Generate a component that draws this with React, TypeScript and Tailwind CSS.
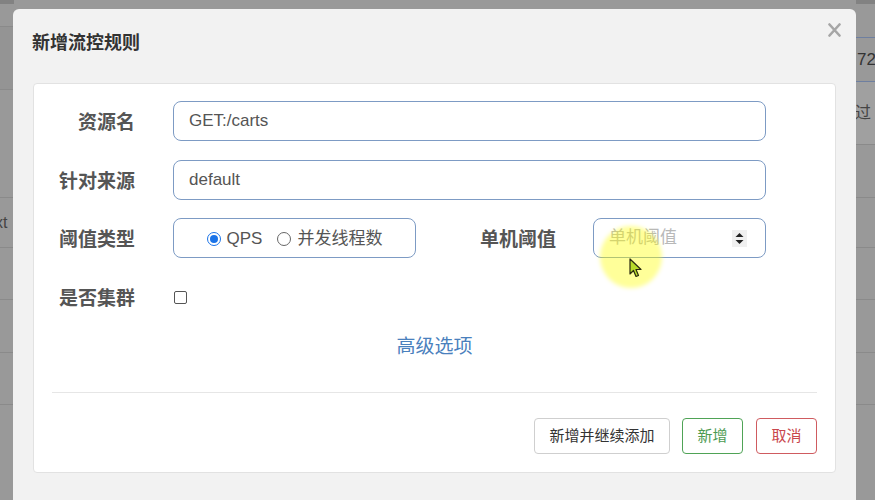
import React from "react";

const FONT = { fontFamily: '"Liberation Sans", "Noto Sans CJK SC", Arial, sans-serif' };

function LeftBg() {
  return (
    <div className="flex w-[14px] flex-col">
      <div className="h-[4px] bg-[#828282]" />
      <div className="h-[23px] border-b border-[#8a8a8a]" />
      <div className="h-[63px] border-b border-[#8a8a8a] bg-[#949494]" />
      <div className="h-[108px] border-b border-[#8a8a8a]" />
      <div className="flex h-[50px] items-center overflow-hidden border-b border-[#8a8a8a] text-[16px] text-[#444]">
        <span className="-ml-[5px]">xt</span>
      </div>
      <div className="h-[52px] border-b border-[#8a8a8a]" />
      <div className="h-[53px] border-b border-[#8a8a8a]" />
      <div className="h-[52px] border-b border-[#8a8a8a]" />
      <div className="flex-1" />
    </div>
  );
}

function RightBg() {
  return (
    <div className="flex w-[19px] flex-col">
      <div className="h-[4px] bg-[#828282]" />
      <div className="h-[34px] border-b border-[#6e7fa0]" />
      <div className="flex h-[44px] items-center border-b border-[#6e7fa0] text-[17px] text-[#333]">
        <span className="pl-[1px]">72</span>
      </div>
      <div className="flex h-[63px] items-center border-b border-[#8a8a8a] bg-[#a0a0a0] text-[16px] text-[#444]">
        <span className="-ml-[1px]">过</span>
      </div>
      <div className="h-[53px] border-b border-[#8a8a8a]" />
      <div className="h-[50px] border-b border-[#8a8a8a]" />
      <div className="h-[52px] border-b border-[#8a8a8a]" />
      <div className="h-[53px] border-b border-[#8a8a8a]" />
      <div className="h-[52px] border-b border-[#8a8a8a]" />
      <div className="flex-1" />
    </div>
  );
}

function Label({ children, className = "" }: { children: React.ReactNode; className?: string }) {
  return (
    <div className={"shrink-0 pt-[4px] text-right text-[19px] font-bold leading-[24px] text-[#555] " + className}>
      {children}
    </div>
  );
}

export default function App() {
  return (
    <div className="relative h-[500px] w-[875px] overflow-hidden bg-[#999999]" style={FONT}>
      <div className="flex h-full w-full justify-between">
        <LeftBg />
        <RightBg />
      </div>

      {/* modal */}
      <div className="absolute left-[13px] top-[9px] h-[520px] w-[843px] rounded-t-[6px] bg-[#f2f2f2]">
        <div className="h-[74px] pl-[19px] pt-[22px] text-[18px] font-bold leading-[24px] text-[#333]">
          新增流控规则
        </div>
        <svg className="absolute left-[815px] top-[14px]" width="13" height="14" viewBox="0 0 13 14">
          <path d="M1.5 1.5 L11.5 12.5 M11.5 1.5 L1.5 12.5" stroke="#a6a6a6" strokeWidth="2.6" strokeLinecap="round" />
        </svg>

        <div className="mx-[20px] flex h-[390px] flex-col rounded-[4px] border border-[#e2e2e2] bg-white pt-[17px]">
          {/* row 1 */}
          <div className="flex h-[40px] items-center">
            <Label className="w-[101px]">资源名</Label>
            <div className="ml-[38px] flex h-[40px] w-[593px] items-center rounded-[8px] border border-[#7d9bc4] pl-[15px] text-[17px] text-[#555]">
              GET:/carts
            </div>
          </div>
          {/* row 2 */}
          <div className="mt-[19px] flex h-[40px] items-center">
            <Label className="w-[101px]">针对来源</Label>
            <div className="ml-[38px] flex h-[40px] w-[593px] items-center rounded-[8px] border border-[#7d9bc4] pl-[15px] text-[17px] text-[#555]">
              default
            </div>
          </div>
          {/* row 3 */}
          <div className="mt-[18px] flex h-[40px] items-center">
            <Label className="w-[101px]">阈值类型</Label>
            <div className="ml-[38px] flex h-[40px] w-[243px] items-center justify-center rounded-[8px] border border-[#7d9bc4] pt-[2px] text-[17px] text-[#555]">
              <span className="flex h-[14px] w-[14px] items-center justify-center rounded-full border-[1.5px] border-[#1a73e8]">
                <span className="h-[8px] w-[8px] rounded-full bg-[#1a73e8]" />
              </span>
              <span className="ml-[6px]">QPS</span>
              <span className="ml-[15px] h-[14px] w-[14px] rounded-full border border-[#666]" />
              <span className="ml-[6px]">并发线程数</span>
            </div>
            <Label className="w-[140px]">单机阈值</Label>
            <div className="ml-[37px] flex h-[40px] w-[173px] items-center justify-between rounded-[8px] border border-[#7d9bc4] pl-[15px] pr-[18px] text-[17px] text-[#b8b8b8]">
              <span>单机阈值</span>
              <svg width="15" height="17" viewBox="0 0 15 17">
                <rect x="0" y="0" width="15" height="17" fill="#f0f0f0" />
                <path d="M3.5 7 L7.5 3 L11.5 7 Z" fill="#222" />
                <path d="M3.5 10 L7.5 14 L11.5 10 Z" fill="#222" />
              </svg>
            </div>
          </div>
          {/* row 4 */}
          <div className="mt-[19px] flex h-[40px] items-center">
            <Label className="w-[101px]">是否集群</Label>
            <span className="ml-[39px] h-[13px] w-[13px] rounded-[2px] border border-[#555] bg-white" />
          </div>

          <div className="mt-[18px] text-center text-[19px] leading-[24px] text-[#4a80bd]">高级选项</div>

          <div className="mx-[18px] mt-[33px] h-px bg-[#e6e6e6]" />

          <div className="mt-[25px] flex justify-end pr-[18px] text-[15px]">
            <div className="flex h-[36px] w-[136px] items-center justify-center rounded-[4px] border border-[#cfcfcf] text-[#333]">
              新增并继续添加
            </div>
            <div className="ml-[12px] flex h-[36px] w-[61px] items-center justify-center rounded-[4px] border border-[#4fa356] text-[#4c9b52]">
              新增
            </div>
            <div className="ml-[13px] flex h-[36px] w-[61px] items-center justify-center rounded-[4px] border border-[#cf5b60] text-[#c9474d]">
              取消
            </div>
          </div>
        </div>
      </div>

      {/* cursor highlight */}
      <div className="pointer-events-none absolute left-[600px] top-[226px] h-[62px] w-[62px] rounded-full bg-[#ffff00]/40 blur-[2px]" />
      <svg className="pointer-events-none absolute left-[629px] top-[258px]" width="14" height="21" viewBox="0 0 14 21">
        <path d="M1 1 L1 16 L4.5 12.5 L7 18.5 L9.5 17.5 L7 11.5 L12 11.5 Z" fill="#b8dc2a" stroke="#2a2a10" strokeWidth="1.2" strokeLinejoin="round" />
      </svg>
    </div>
  );
}
